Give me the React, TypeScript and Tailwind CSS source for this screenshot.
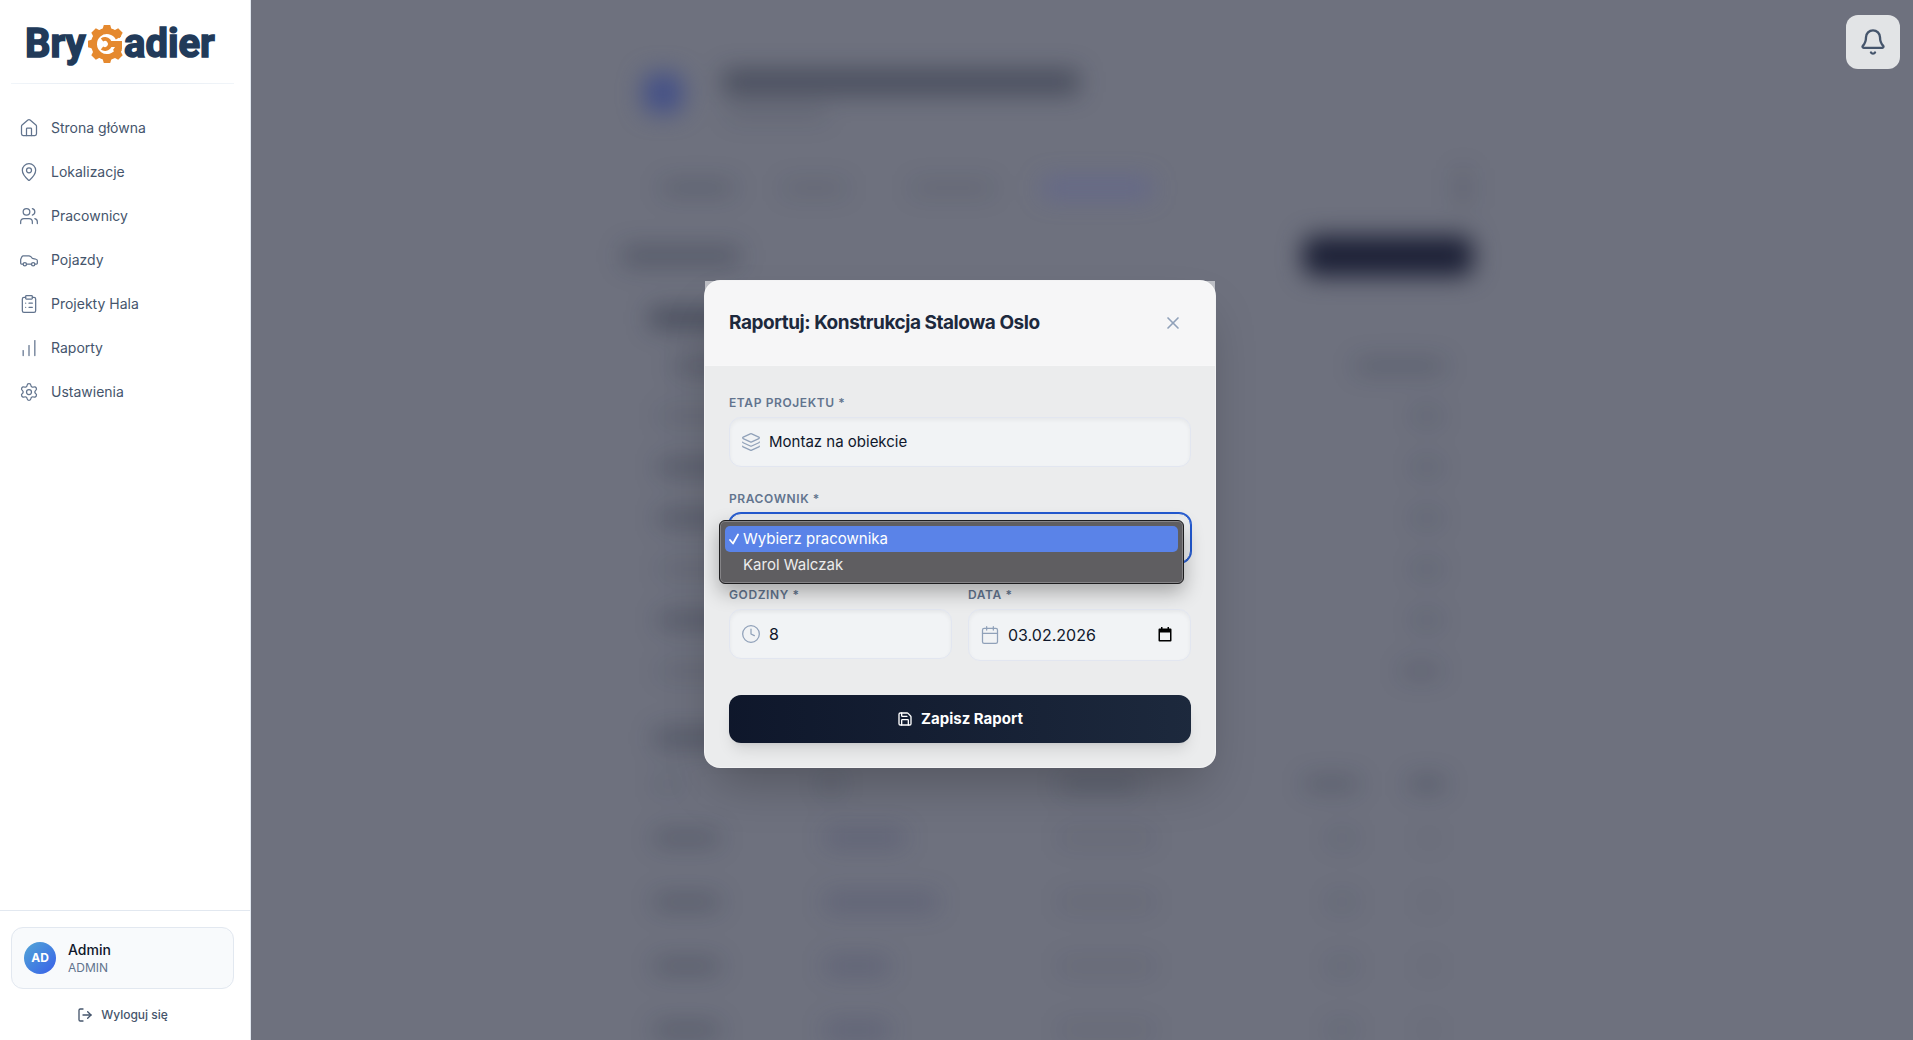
import { useState } from 'react'
import {
  Bell,
  Calendar,
  Car,
  ChartNoAxesColumnIncreasing,
  ClipboardList,
  Clock,
  House,
  Layers,
  LogOut,
  MapPin,
  Save,
  Settings,
  Users,
  X,
  type LucideIcon,
} from 'lucide-react'
import { clsx } from 'clsx'

interface NavItem {
  label: string
  icon: LucideIcon
}

const NAV_ITEMS: NavItem[] = [
  { label: 'Strona główna', icon: House },
  { label: 'Lokalizacje', icon: MapPin },
  { label: 'Pracownicy', icon: Users },
  { label: 'Pojazdy', icon: Car },
  { label: 'Projekty Hala', icon: ClipboardList },
  { label: 'Raporty', icon: ChartNoAxesColumnIncreasing },
  { label: 'Ustawienia', icon: Settings },
]

const WORKERS = ['Wybierz pracownika', 'Karol Walczak']

const LABEL = 'block text-xs font-semibold uppercase tracking-wider text-slate-500'
const FIELD =
  'w-full rounded-xl border bg-[#f1f3f5] pl-[39px] text-slate-900 shadow-[inset_0_2px_4px_rgba(0,0,0,0.05)] outline-none'
const FIELD_ICON = 'pointer-events-none absolute left-3 top-1/2 size-5 -translate-y-1/2 text-slate-400'

function Logo() {
  return (
    <svg viewBox="0 0 200 56" className="h-14 w-[200px]" role="img" aria-label="Brygadier">
      <g
        fill="#213a59"
        stroke="#213a59"
        strokeWidth="1.5"
        fontFamily="Roboto, sans-serif"
        fontWeight="700"
        fontSize="40"
      >
        <text x="2" y="41">Bry</text>
        <text x="101" y="41">adier</text>
      </g>
      <g transform="translate(84 28)" fill="none" stroke="#e5892e">
        {/* teeth */}
        <g fill="#e5892e" stroke="none">
          {[0, 45, 135, 180, 225, 270, 315].map((angle) => (
            <path key={angle} d="M-5 -13 L-3.200 -19 H3.200 L5 -13 Z" transform={`rotate(${angle})`} />
          ))}
        </g>
        <path d="M11.500 -6 A13 13 0 1 0 12 5" strokeWidth="6" />
        <path d="M4 -3 H15 V5 Q14 9 11 11 L6 6 L8 3 H4 Z" fill="#e5892e" stroke="none" />
        {/* wrench jaw */}
        <path d="M-5 -4 A5 5 0 1 1 -5 4" strokeWidth="4" />
      </g>
    </svg>
  )
}

function Sidebar() {
  return (
    <aside className="relative z-20 flex w-[251px] shrink-0 flex-col border-r border-slate-200 bg-white">
      <div className="mr-4 ml-[11px] flex h-[83px] justify-center pt-4">
        <Logo />
      </div>
      <div className="mr-4 ml-[11px] h-px bg-linear-to-r from-slate-100 via-slate-200 to-slate-100" />

      <nav className="mt-[22px] flex flex-1 flex-col">
        {NAV_ITEMS.map(({ label, icon: Icon }) => (
          <a key={label} href="#" className="flex h-11 items-center gap-3 pl-[19px] text-sm text-slate-600">
            <Icon className="size-5 text-slate-500" strokeWidth={1.5} />
            {label}
          </a>
        ))}
      </nav>

      <div className="border-t border-slate-200 pt-4 pr-4 pb-[7px] pl-[11px]">
        <div className="flex h-[62px] items-center gap-3 rounded-xl border border-slate-200 bg-slate-50 px-3">
          <div className="flex size-8 items-center justify-center rounded-full bg-linear-to-br from-[#55a5d5] to-[#3b5ce8] text-xs font-bold text-white">
            AD
          </div>
          <div>
            <p className="text-sm font-medium leading-5 text-slate-900">Admin</p>
            <p className="text-xs leading-4 text-slate-500">ADMIN</p>
          </div>
        </div>
        <button className="mt-2 flex h-9 w-full items-center justify-center gap-2 text-xs font-medium text-slate-600">
          <LogOut className="size-4" />
          Wyloguj się
        </button>
      </div>
    </aside>
  )
}

function Bar({ className }: { className?: string }) {
  return <div className={clsx('h-3.5 rounded', className)} />
}

function ProjectPage() {
  return (
    <div aria-hidden="true" className="h-full pr-[69px] blur-[12px]">
      <div className="mx-auto max-w-[851px] pt-[63px]">
        <div className="flex h-[60px] items-center gap-10 pl-[21px]">
          <div className="size-10 shrink-0 rounded-xl bg-[#3f4d88]/90" />
          <div className="space-y-3 pt-1">
            <Bar className="h-6 w-[356px] bg-slate-900/40" />
            <Bar className="ml-1 w-[100px] bg-slate-900/12" />
          </div>
        </div>

        <div className="mt-[41px] flex h-12 items-center gap-12 pl-[40px]">
          <Bar className="w-[72px] bg-slate-900/20" />
          <Bar className="w-[65px] bg-slate-900/12" />
          <Bar className="ml-4 w-[83px] bg-slate-900/12" />
          <Bar className="h-5 w-[110px] bg-[#4f56a0]/35" />
          <Bar className="mr-0.5 ml-auto h-10 w-4 bg-slate-900/12" />
        </div>

        <div className="mt-5 flex h-12 items-center justify-between">
          <Bar className="h-5 w-[118px] bg-slate-900/25" />
          <div className="h-10 w-[170px] rounded-xl bg-[#1c2036]" />
        </div>

        <div className="mt-3.5 px-7">
          <div className="flex h-12 items-center">
            <Bar className="h-5 w-[180px] bg-slate-900/40" />
          </div>
          <div className="flex h-12 items-center justify-between">
            <Bar className="ml-6 w-[120px] bg-slate-900/25" />
            <Bar className="w-[90px] bg-slate-900/20" />
          </div>
          {[false, true, true, false, true, false].map((strong, i) => (
            <div key={i} className="flex h-[51px] items-center justify-between">
              <Bar className={clsx('ml-2 w-[110px]', strong ? 'bg-slate-900/30' : 'bg-slate-900/12')} />
              <Bar className={clsx('mr-1', i === 5 ? 'w-10 bg-slate-900/18' : 'w-7 bg-slate-900/15')} />
            </div>
          ))}
        </div>

        <div className="mt-[18px] px-8">
          <div className="flex h-12 items-center">
            <Bar className="h-5 w-[150px] bg-slate-900/25" />
          </div>
          <div className="grid h-11 grid-cols-[167px_238px_245px_105px_1fr] items-center">
            <Bar className="w-7 bg-slate-900/12" />
            <Bar className="w-5 bg-slate-900/20" />
            <Bar className="w-20 bg-slate-900/20" />
            <Bar className="w-[55px] bg-slate-900/22" />
            <Bar className="w-9 bg-slate-900/25" />
          </div>
          {['w-[80px]', 'w-[112px]', 'w-[64px]', 'w-[64px]'].map((width, i) => (
            <div key={i} className="grid h-16 grid-cols-[167px_238px_245px_105px_1fr] items-center">
              <Bar className="w-[66px] bg-slate-900/26" />
              <Bar className={clsx('ml-1 h-4 bg-[#2a2f5a]/25', width)} />
              <Bar className="w-[95px] bg-slate-900/10" />
              <Bar className="ml-6 w-7 bg-slate-900/12" />
              <Bar className="ml-3 w-4 bg-slate-900/8" />
            </div>
          ))}
        </div>
      </div>
    </div>
  )
}

interface WorkerMenuProps {
  selected: string
  onSelect: (worker: string) => void
}

function WorkerMenu({ selected, onSelect }: WorkerMenuProps) {
  return (
    <ul
      role="listbox"
      aria-label="Pracownik"
      className="absolute top-[7px] -left-2.5 z-10 h-16 w-[465px] rounded-md border border-[#1d1d1f] bg-[#5f5e61] p-[5px] text-[15px] text-[#ececec] shadow-[inset_0_0_0_1px_#858487,0_8px_20px_rgba(0,0,0,0.3)]"
    >
      {WORKERS.map((worker) => (
        <li
          key={worker}
          role="option"
          aria-selected={worker === selected}
          onClick={() => onSelect(worker)}
          className={clsx(
            'flex h-[26px] items-center rounded-[5px]',
            worker === selected && 'bg-[#5a83e8] text-white'
          )}
        >
          <span className="flex w-[18px] justify-center">
            {worker === selected && (
              <svg viewBox="0 0 10 12" className="h-3 w-2.5" fill="none" stroke="currentColor" strokeWidth="1.8" strokeLinecap="round" strokeLinejoin="round">
                <path d="M1 7 L4 10.500 L9 1.500" />
              </svg>
            )}
          </span>
          {worker}
        </li>
      ))}
    </ul>
  )
}

function ReportModal() {
  const [worker, setWorker] = useState(WORKERS[0])
  const [hours, setHours] = useState('8')
  const [date, setDate] = useState('03.02.2026')

  return (
    <div className="absolute inset-0 z-10 flex items-center justify-center pt-2 pl-[7px]">
      <div
        role="dialog"
        aria-labelledby="report-title"
        className="w-full max-w-lg rounded-2xl border border-white/40 bg-[#ebeced] shadow-2xl"
      >
        <div className="flex items-center justify-between border-b border-white/20 bg-white/55 p-6">
          <h2 id="report-title" className="text-[19px] font-bold tracking-tight text-slate-800">
            Raportuj: Konstrukcja Stalowa Oslo
          </h2>
          <button aria-label="Zamknij" className="p-2 text-slate-400">
            <X className="size-5" />
          </button>
        </div>

        <form className="px-6 pt-[29px] pb-6" onSubmit={(e) => e.preventDefault()}>
          <div className="space-y-6">
            <div className="space-y-1.5">
              <label htmlFor="stage" className={LABEL}>Etap projektu *</label>
              <div className="relative">
                <Layers className={FIELD_ICON} strokeWidth={1.5} />
                <select id="stage" className={clsx(FIELD, 'h-[50px] appearance-none border-[#e2e6f0] text-[15px]')}>
                  <option>Montaz na obiekcie</option>
                </select>
              </div>
            </div>

            <div className="space-y-1.5">
              <label htmlFor="worker" className={LABEL}>Pracownik *</label>
              <div className="relative">
                <select
                  id="worker"
                  value={worker}
                  onChange={(e) => setWorker(e.target.value)}
                  className={clsx(FIELD, 'h-[50px] appearance-none border-[#2259d0] text-[15px] ring-1 ring-[#2259d0]')}
                >
                  {WORKERS.map((name) => (
                    <option key={name}>{name}</option>
                  ))}
                </select>
                <WorkerMenu selected={worker} onSelect={setWorker} />
              </div>
            </div>

            <div className="grid grid-cols-2 items-start gap-4">
              <div className="space-y-1.5">
                <label htmlFor="hours" className={LABEL}>Godziny *</label>
                <div className="relative">
                  <Clock className={FIELD_ICON} strokeWidth={1.5} />
                  <input
                    id="hours"
                    value={hours}
                    onChange={(e) => setHours(e.target.value)}
                    className={clsx(FIELD, 'h-[50px] border-[#e2e6f0] text-base')}
                  />
                </div>
              </div>
              <div className="space-y-1.5">
                <label htmlFor="date" className={LABEL}>Data *</label>
                <div className="relative">
                  <Calendar className={FIELD_ICON} strokeWidth={1.5} />
                  <input
                    id="date"
                    value={date}
                    onChange={(e) => setDate(e.target.value)}
                    className={clsx(FIELD, 'h-[52px] border-[#e2e6f0] text-base')}
                  />
                  {/* date picker indicator */}
                  <svg viewBox="0 0 14 16" className="absolute top-[18px] right-[19px] h-4 w-3.5" fill="#000">
                    <path d="M3 0h1.500v1.500h5V0H11v1.500h1.500A1 1 0 0 1 13.500 2.500v11a1 1 0 0 1-1 1h-11a1 1 0 0 1-1-1v-11a1 1 0 0 1 1-1H3zM2 5.500v7.500h10V5.500z" fillRule="evenodd" />
                  </svg>
                </div>
              </div>
            </div>
          </div>

          <button
            type="submit"
            className="mt-[34px] flex h-12 w-full items-center justify-center gap-2 rounded-xl bg-linear-to-r from-slate-900 to-slate-800 text-[15px] font-bold text-white shadow-lg"
          >
            <Save className="size-4" />
            Zapisz Raport
          </button>
        </form>
      </div>
    </div>
  )
}

export default function App() {
  return (
    <div className="relative flex h-screen overflow-hidden bg-[#6e717e] font-['Inter',sans-serif]">
      <Sidebar />
      <main className="min-w-0 flex-1 overflow-hidden">
        <ProjectPage />
      </main>
      <ReportModal />
      <button
        aria-label="Powiadomienia"
        className="absolute top-[15px] right-[13px] z-20 flex size-[54px] items-center justify-center rounded-xl bg-[#e2e4e6] text-slate-600"
      >
        <Bell className="size-7" strokeWidth={2} />
      </button>
    </div>
  )
}
